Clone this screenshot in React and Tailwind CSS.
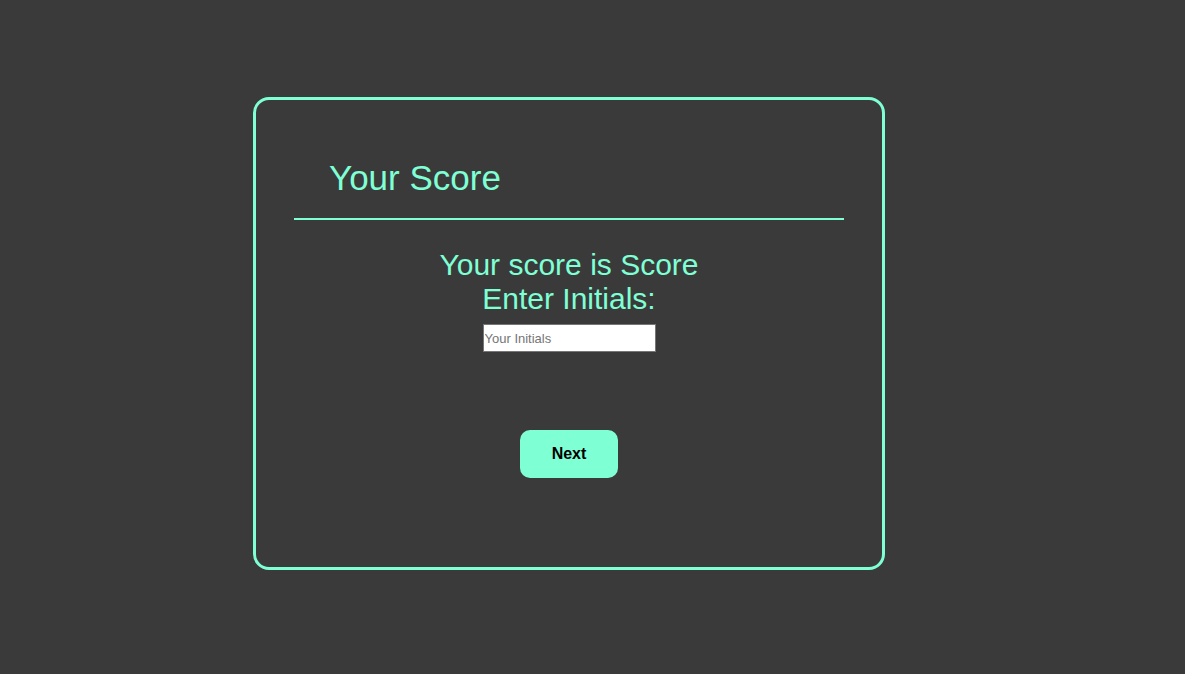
import React from "react";

export default function App() {
  return (
    <div className="min-h-screen w-full bg-[#3a3a3a] font-['Liberation_Sans',Arial,sans-serif] pt-[97px]">
      <div className="ml-[253px] w-[632px] h-[473px] border-[3px] border-[#7fffd4] rounded-[16px] px-[38px] pt-[58px]">
        <h1 className="text-[#7fffd4] text-[35px] leading-[40px] pl-[35px]">Your Score</h1>
        <hr className="mt-[20px] border-0 h-[2px] bg-[#7fffd4]" />
        <div className="flex flex-col items-center mt-[28px]">
          <p className="text-[#7fffd4] text-[30px] leading-[34px]">Your score is Score</p>
          <p className="text-[#7fffd4] text-[30px] leading-[34px]">Enter Initials:</p>
          <input
            type="text"
            placeholder="Your Initials"
            className="mt-[8px] w-[173px] h-[28px] bg-white border border-[#767676] text-[13px] text-black placeholder-[#757575] px-[1px] outline-none"
          />
          <button className="mt-[78px] w-[98px] h-[48px] bg-[#7fffd4] rounded-[10px] font-bold text-[16px] text-black">
            Next
          </button>
        </div>
      </div>
    </div>
  );
}
